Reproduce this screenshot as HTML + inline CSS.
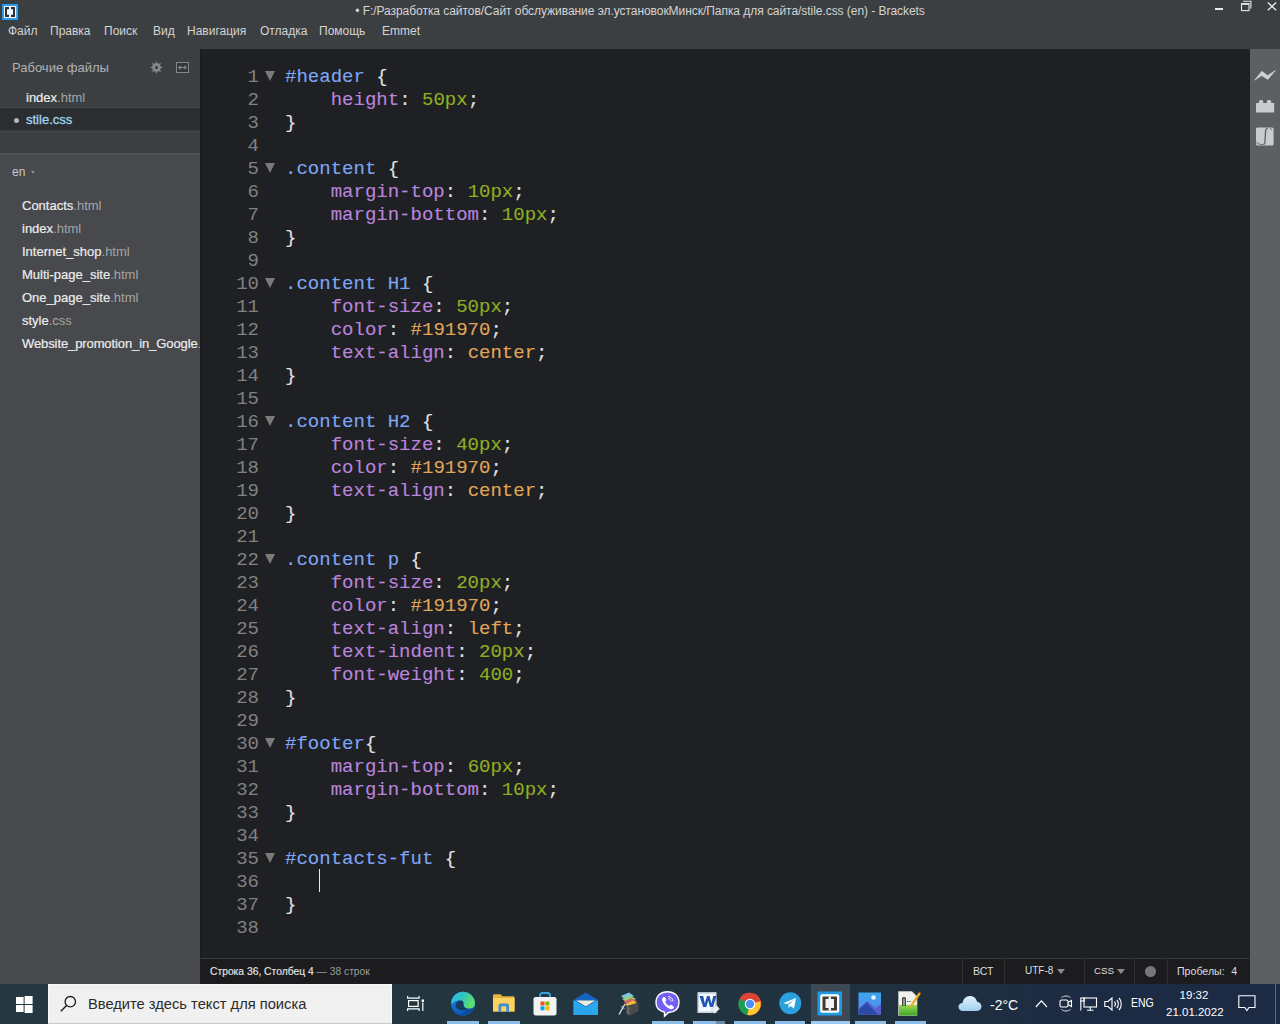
<!DOCTYPE html>
<html><head><meta charset="utf-8">
<style>
*{margin:0;padding:0;box-sizing:border-box}
html,body{width:1280px;height:1024px;overflow:hidden;background:#3c3f41;font-family:"Liberation Sans",sans-serif;position:relative}
.abs{position:absolute}
svg{position:absolute;overflow:visible}
#titlebar{left:0;top:0;width:1280px;height:49px;background:#3c3f41}
#title{left:0;top:4px;width:1280px;text-align:center;color:#d4d4d4;font-size:12px;white-space:nowrap;line-height:14px;letter-spacing:-0.05px;padding-left:0px}
.menu{top:24px;color:#d4d4d4;font-size:12px;white-space:nowrap;line-height:14px}
#sidebar{left:0;top:49px;width:200px;height:935px;background:#47494c}
#ws{left:0;top:49px;width:200px;height:106px;background:#3c3f42}
#editor{left:200px;top:49px;width:1050px;height:935px;background:#1e2023}
#toolbar{left:1250px;top:49px;width:30px;height:935px;background:#5d6062}
#status{left:200px;top:958px;width:1050px;height:26px;background:#1c1c1e;border-top:1px solid #35383b}
#taskbar{left:0;top:984px;width:1280px;height:40px;background:linear-gradient(90deg,#243842 0px,#23353f 600px,#1f2f3f 940px,#1c2b44 1100px,#1c2a44 1280px)}
.code{left:285.0px;font-family:"Liberation Mono",monospace;font-size:19.033px;white-space:pre;line-height:23px;-webkit-text-stroke:0.12px currentColor}
.code span{-webkit-text-stroke:0.12px currentColor}
.ln{left:200px;width:59px;text-align:right;color:#818181;font-family:"Liberation Mono",monospace;font-size:19.033px;line-height:23px}
.fold{left:265px;width:0;height:0;border-left:5.5px solid transparent;border-right:5.5px solid transparent;border-top:10px solid #7a7a7a}
.s{color:#7ea6f4}.p{color:#bb84dc}.n{color:#8fae22}.k{color:#e0a658}.b{color:#e2e2e2}
.fl{left:22px;font-size:13px;color:#ececec;white-space:nowrap;line-height:16px;-webkit-text-stroke:0.2px #ececec}
.fl i{font-style:normal;color:#a3a6a8;-webkit-text-stroke:0}
.st{font-size:11px;color:#dcdcdc;white-space:nowrap;line-height:14px}
.sep{top:959px;width:1px;height:25px;background:#2d2f31}
.ul{top:1021px;height:3px;background:#8cbde9}
</style></head><body>
<div id="titlebar" class="abs"></div>
<div id="title" class="abs">• F:/Разработка сайтов/Сайт обслуживание эл.установокМинск/Папка для сайта/stile.css (en) - Brackets</div>
<div class="abs menu" style="left:8px">Файл</div>
<div class="abs menu" style="left:50px">Правка</div>
<div class="abs menu" style="left:104px">Поиск</div>
<div class="abs menu" style="left:153px">Вид</div>
<div class="abs menu" style="left:187px">Навигация</div>
<div class="abs menu" style="left:260px">Отладка</div>
<div class="abs menu" style="left:319px">Помощь</div>
<div class="abs menu" style="left:382px">Emmet</div>
<svg style="left:0;top:0" width="20" height="22" viewBox="0 0 20 22"><rect x="1.5" y="3.5" width="17" height="17" fill="#17476a"/><rect x="2" y="4" width="16" height="16" fill="#2f9ae0"/><rect x="4" y="6" width="12.2" height="12" rx="0.8" fill="#f4fbff"/><rect x="5" y="7" width="10" height="10" fill="#2a2e35"/><rect x="7" y="9.2" width="6" height="5.5" fill="#f4f8fa"/><rect x="9" y="7" width="2" height="10" fill="#f4f8fa"/></svg>
<div class="abs" style="left:1215px;top:8px;width:8px;height:2px;background:#e8e8e8"></div>
<svg style="left:1240px;top:0px" width="12" height="12" viewBox="0 0 12 12"><path d="M3 1.2H10.9V8.6" fill="none" stroke="#e8e8e8" stroke-width="1.1"/><rect x="1.5" y="3.6" width="7.5" height="7" fill="none" stroke="#e8e8e8" stroke-width="1.1"/><rect x="1.5" y="3.2" width="7.5" height="1.6" fill="#e8e8e8"/></svg>
<svg style="left:1267px;top:2px" width="10" height="9" viewBox="0 0 10 9"><path d="M0.8 0.6L9.2 8.2M9.2 0.6L0.8 8.2" stroke="#f0f0f0" stroke-width="1.3"/></svg>


<div id="sidebar" class="abs"></div>
<div id="ws" class="abs"></div>
<div class="abs" style="left:12px;top:60px;font-size:13px;color:#b0b2b4;white-space:nowrap;line-height:16px">Рабочие файлы</div>
<svg style="left:149.7px;top:60.9px" width="13" height="13" viewBox="0 0 13 13"><polygon points="6.50,0.20 7.92,3.08 10.95,2.05 9.92,5.08 12.80,6.50 9.92,7.92 10.95,10.95 7.92,9.92 6.50,12.80 5.08,9.92 2.05,10.95 3.08,7.92 0.20,6.50 3.08,5.08 2.05,2.05 5.08,3.08" fill="#85888b"/><circle cx="6.5" cy="6.5" r="3.9" fill="#85888b"/><circle cx="6.5" cy="6.5" r="1.5" fill="#34373a"/></svg>
<svg style="left:176px;top:62px" width="13" height="11" viewBox="0 0 13 11"><rect x="0.5" y="0.5" width="12" height="10" fill="#34373a" stroke="#85888b" stroke-width="1"/><path d="M4 5.5h5" stroke="#85888b" stroke-width="1.2"/><path d="M2 5.5L4.5 3V8Z M11 5.5L8.5 3V8Z" fill="#85888b"/></svg>
<div class="abs fl" style="left:26px;top:90px">index<i>.html</i></div>
<div class="abs" style="left:0;top:107px;width:200px;height:1px;background:#45484a"></div>
<div class="abs" style="left:0;top:108px;width:200px;height:21px;background:#2b2d30"></div>
<div class="abs" style="left:0;top:129px;width:200px;height:2px;background:#333538"></div>
<div class="abs" style="left:0;top:131px;width:200px;height:1px;background:#46494b"></div>
<div class="abs" style="left:13.5px;top:117.5px;width:5.5px;height:5.5px;border-radius:50%;background:#b4b6b8"></div>
<div class="abs fl" style="left:26px;top:112px;color:#a0d6f2;-webkit-text-stroke:0.3px #a0d6f2">stile<i style="color:#a0d6f2;-webkit-text-stroke:0.3px #a0d6f2">.css</i></div>
<div class="abs" style="left:0;top:153px;width:200px;height:2px;background:#505356"></div>
<div class="abs" style="left:12px;top:165px;font-size:12px;color:#c8cacb;line-height:14px">en</div>
<div class="abs" style="left:31px;top:170.5px;width:0;height:0;border-left:2.7px solid transparent;border-right:2.7px solid transparent;border-top:3.8px solid #8a8d90"></div>
<div class="abs" style="left:0;top:0;width:200px;height:984px;overflow:hidden">
<div class="abs fl" style="top:198px">Contacts<i>.html</i></div>
<div class="abs fl" style="top:221px">index<i>.html</i></div>
<div class="abs fl" style="top:244px">Internet_shop<i>.html</i></div>
<div class="abs fl" style="top:267px">Multi-page_site<i>.html</i></div>
<div class="abs fl" style="top:290px">One_page_site<i>.html</i></div>
<div class="abs fl" style="top:313px">style<i>.css</i></div>
<div class="abs fl" style="top:336px;letter-spacing:-0.1px">Website_promotion_in_Google<i>.html</i></div>
</div>

<div id="editor" class="abs"></div>
<div class="abs" style="left:200px;top:49px;width:1px;height:909px;background:#191b1d"></div>
<div class="ln abs" style="top:65.5px">1</div>
<div class="fold abs" style="top:71px"></div>
<div class="code abs" style="top:65.5px"><span class="s">#header</span> <span class="b">{</span></div>
<div class="ln abs" style="top:88.5px">2</div>
<div class="code abs" style="top:88.5px">    <span class="p">height</span><span class="b">:</span> <span class="n">50px</span><span class="b">;</span></div>
<div class="ln abs" style="top:111.5px">3</div>
<div class="code abs" style="top:111.5px"><span class="b">}</span></div>
<div class="ln abs" style="top:134.5px">4</div>
<div class="code abs" style="top:134.5px"><span class="b"></span></div>
<div class="ln abs" style="top:157.5px">5</div>
<div class="fold abs" style="top:163px"></div>
<div class="code abs" style="top:157.5px"><span class="s">.content</span> <span class="b">{</span></div>
<div class="ln abs" style="top:180.5px">6</div>
<div class="code abs" style="top:180.5px">    <span class="p">margin-top</span><span class="b">:</span> <span class="n">10px</span><span class="b">;</span></div>
<div class="ln abs" style="top:203.5px">7</div>
<div class="code abs" style="top:203.5px">    <span class="p">margin-bottom</span><span class="b">:</span> <span class="n">10px</span><span class="b">;</span></div>
<div class="ln abs" style="top:226.5px">8</div>
<div class="code abs" style="top:226.5px"><span class="b">}</span></div>
<div class="ln abs" style="top:249.5px">9</div>
<div class="code abs" style="top:249.5px"><span class="b"></span></div>
<div class="ln abs" style="top:272.5px">10</div>
<div class="fold abs" style="top:278px"></div>
<div class="code abs" style="top:272.5px"><span class="s">.content H1</span> <span class="b">{</span></div>
<div class="ln abs" style="top:295.5px">11</div>
<div class="code abs" style="top:295.5px">    <span class="p">font-size</span><span class="b">:</span> <span class="n">50px</span><span class="b">;</span></div>
<div class="ln abs" style="top:318.5px">12</div>
<div class="code abs" style="top:318.5px">    <span class="p">color</span><span class="b">:</span> <span class="k">#191970</span><span class="b">;</span></div>
<div class="ln abs" style="top:341.5px">13</div>
<div class="code abs" style="top:341.5px">    <span class="p">text-align</span><span class="b">:</span> <span class="k">center</span><span class="b">;</span></div>
<div class="ln abs" style="top:364.5px">14</div>
<div class="code abs" style="top:364.5px"><span class="b">}</span></div>
<div class="ln abs" style="top:387.5px">15</div>
<div class="code abs" style="top:387.5px"><span class="b"></span></div>
<div class="ln abs" style="top:410.5px">16</div>
<div class="fold abs" style="top:416px"></div>
<div class="code abs" style="top:410.5px"><span class="s">.content H2</span> <span class="b">{</span></div>
<div class="ln abs" style="top:433.5px">17</div>
<div class="code abs" style="top:433.5px">    <span class="p">font-size</span><span class="b">:</span> <span class="n">40px</span><span class="b">;</span></div>
<div class="ln abs" style="top:456.5px">18</div>
<div class="code abs" style="top:456.5px">    <span class="p">color</span><span class="b">:</span> <span class="k">#191970</span><span class="b">;</span></div>
<div class="ln abs" style="top:479.5px">19</div>
<div class="code abs" style="top:479.5px">    <span class="p">text-align</span><span class="b">:</span> <span class="k">center</span><span class="b">;</span></div>
<div class="ln abs" style="top:502.5px">20</div>
<div class="code abs" style="top:502.5px"><span class="b">}</span></div>
<div class="ln abs" style="top:525.5px">21</div>
<div class="code abs" style="top:525.5px"><span class="b"></span></div>
<div class="ln abs" style="top:548.5px">22</div>
<div class="fold abs" style="top:554px"></div>
<div class="code abs" style="top:548.5px"><span class="s">.content p</span> <span class="b">{</span></div>
<div class="ln abs" style="top:571.5px">23</div>
<div class="code abs" style="top:571.5px">    <span class="p">font-size</span><span class="b">:</span> <span class="n">20px</span><span class="b">;</span></div>
<div class="ln abs" style="top:594.5px">24</div>
<div class="code abs" style="top:594.5px">    <span class="p">color</span><span class="b">:</span> <span class="k">#191970</span><span class="b">;</span></div>
<div class="ln abs" style="top:617.5px">25</div>
<div class="code abs" style="top:617.5px">    <span class="p">text-align</span><span class="b">:</span> <span class="k">left</span><span class="b">;</span></div>
<div class="ln abs" style="top:640.5px">26</div>
<div class="code abs" style="top:640.5px">    <span class="p">text-indent</span><span class="b">:</span> <span class="n">20px</span><span class="b">;</span></div>
<div class="ln abs" style="top:663.5px">27</div>
<div class="code abs" style="top:663.5px">    <span class="p">font-weight</span><span class="b">:</span> <span class="n">400</span><span class="b">;</span></div>
<div class="ln abs" style="top:686.5px">28</div>
<div class="code abs" style="top:686.5px"><span class="b">}</span></div>
<div class="ln abs" style="top:709.5px">29</div>
<div class="code abs" style="top:709.5px"><span class="b"></span></div>
<div class="ln abs" style="top:732.5px">30</div>
<div class="fold abs" style="top:738px"></div>
<div class="code abs" style="top:732.5px"><span class="s">#footer</span><span class="b">{</span></div>
<div class="ln abs" style="top:755.5px">31</div>
<div class="code abs" style="top:755.5px">    <span class="p">margin-top</span><span class="b">:</span> <span class="n">60px</span><span class="b">;</span></div>
<div class="ln abs" style="top:778.5px">32</div>
<div class="code abs" style="top:778.5px">    <span class="p">margin-bottom</span><span class="b">:</span> <span class="n">10px</span><span class="b">;</span></div>
<div class="ln abs" style="top:801.5px">33</div>
<div class="code abs" style="top:801.5px"><span class="b">}</span></div>
<div class="ln abs" style="top:824.5px">34</div>
<div class="code abs" style="top:824.5px"><span class="b"></span></div>
<div class="ln abs" style="top:847.5px">35</div>
<div class="fold abs" style="top:853px"></div>
<div class="code abs" style="top:847.5px"><span class="s">#contacts-fut</span> <span class="b">{</span></div>
<div class="ln abs" style="top:870.5px">36</div>
<div class="code abs" style="top:870.5px"><span class="b">    </span></div>
<div class="ln abs" style="top:893.5px">37</div>
<div class="code abs" style="top:893.5px"><span class="b">}</span></div>
<div class="ln abs" style="top:916.5px">38</div>
<div class="code abs" style="top:916.5px"><span class="b"></span></div>
<div class="abs" style="left:319px;top:869px;width:1.2px;height:23px;background:#e8e8e8"></div>
<div id="toolbar" class="abs"></div>
<svg style="left:1254px;top:69px" width="22" height="13" viewBox="0 0 22 13"><path d="M0.6 11.2L7.8 2.3L13.6 6.6L21.6 1.3L13.9 10.4L7.6 6.6Z" fill="#cfd1d2" stroke="#cfd1d2" stroke-width="0.6" stroke-linejoin="round"/></svg>
<svg style="left:1256px;top:99px" width="19" height="14" viewBox="0 0 19 14"><rect x="0" y="4" width="18.2" height="9.6" rx="0.6" fill="#c9cbcc"/><rect x="3" y="1" width="4.2" height="4" rx="1.5" fill="#c9cbcc"/><rect x="10.8" y="1" width="4.4" height="4" rx="1.5" fill="#c9cbcc"/></svg>
<svg style="left:1256px;top:127px" width="18" height="19" viewBox="0 0 18 19"><rect x="0" y="0.5" width="17.6" height="18" rx="1.5" fill="#c9cbcc"/><path d="M11.8 0.8C8.5 2 9.8 5.5 9.3 8.5C8.8 12 9.5 15 8.5 17.2" fill="none" stroke="#5d6062" stroke-width="1.3"/><path d="M0.3 15.3C2 17.3 5 17.8 8.5 17.2" fill="none" stroke="#5d6062" stroke-width="0.9"/><path d="M14.5 1L15.5 3" stroke="#5d6062" stroke-width="0.8"/></svg>

<div id="status" class="abs"></div>
<div class="abs st" style="left:210px;top:965px;font-size:10.3px"><span style="color:#e4e4e4;-webkit-text-stroke:0.15px #e4e4e4">Строка 36, Столбец 4</span> <span style="color:#9a9c9e">— 38 строк</span></div>
<div class="abs sep" style="left:962px"></div>
<div class="abs sep" style="left:1004px"></div>
<div class="abs sep" style="left:1084px"></div>
<div class="abs sep" style="left:1134px"></div>
<div class="abs sep" style="left:1167px"></div>
<div class="abs st" style="left:973px;top:964px;font-size:10.6px">ВСТ</div>
<div class="abs st" style="left:1025px;top:964px;font-size:10px">UTF-8</div>
<div class="abs" style="left:1057px;top:969px;width:0;height:0;border-left:4px solid transparent;border-right:4px solid transparent;border-top:5px solid #8a8c8e"></div>
<div class="abs st" style="left:1094px;top:964px;font-size:9.8px">CSS</div>
<div class="abs" style="left:1117px;top:969px;width:0;height:0;border-left:4px solid transparent;border-right:4px solid transparent;border-top:5px solid #8a8c8e"></div>
<div class="abs" style="left:1145px;top:966px;width:11px;height:11px;border-radius:50%;background:#757779"></div>
<div class="abs st" style="left:1177px;top:964px;font-size:10.6px">Пробелы:<span style="margin-left:6.5px">4</span></div>

<div id="taskbar" class="abs"></div>
<svg style="left:16px;top:996px" width="17" height="17" viewBox="0 0 17 17"><g fill="#ffffff"><rect x="0" y="1" width="7.6" height="7" /><rect x="8.6" y="0" width="8" height="8"/><rect x="0" y="9" width="7.6" height="7"/><rect x="8.6" y="9" width="8" height="8"/></g></svg>
<div class="abs" style="left:48px;top:984px;width:344px;height:40px;background:#f0f0f0;border:1px solid #f7f7f7;border-bottom-color:#c8c8c8"></div>
<svg style="left:60px;top:995px" width="17" height="17" viewBox="0 0 17 17"><circle cx="10.3" cy="6.7" r="5.2" fill="none" stroke="#1a1a1a" stroke-width="1.3"/><path d="M6.6 10.4L0.8 16.2" stroke="#1a1a1a" stroke-width="1.4"/></svg>
<div class="abs" style="left:88px;top:995px;font-size:14.7px;color:#2b2b2b;white-space:nowrap;line-height:18px">Введите здесь текст для поиска</div>
<svg style="left:407px;top:996px" width="17" height="15" viewBox="0 0 17 15"><g fill="none" stroke="#ffffff" stroke-width="1.2"><path d="M0.6 0v2.2h11.5V0M0.6 15v-2.2h11.5V15"/><rect x="1.6" y="4.6" width="9.5" height="5.8"/><path d="M15.8 6.5v8.5"/></g><rect x="14.6" y="3.5" width="2.4" height="2.4" fill="#fff"/></svg>

<svg style="left:450px;top:991px" width="26" height="26" viewBox="0 0 26 26"><defs><linearGradient id="eg1" x1="0" y1="0" x2="1" y2="0.4"><stop offset="0" stop-color="#33b5f0"/><stop offset="0.5" stop-color="#2fc4c0"/><stop offset="1" stop-color="#5fe06a"/></linearGradient><linearGradient id="eg2" x1="0" y1="0" x2="0.3" y2="1"><stop offset="0" stop-color="#1e8ef0"/><stop offset="1" stop-color="#0c56b5"/></linearGradient></defs><circle cx="13" cy="12.8" r="12" fill="url(#eg2)"/><path d="M1.2 11.5C2 5 7 0.8 13 0.8C19.6 0.8 25 6 25 12.5C25 15.5 23 17.5 19.5 17.5C16 17.5 13.5 16 13.5 13.5C13.5 11 12 9.5 9.5 9.5C6 9.5 3 11 1.2 13.5Z" fill="url(#eg1)"/><path d="M5.5 15C5.5 11.5 8 9.5 10.5 9.5C13 9.5 14 11.5 13.5 13.5C13 15 14.5 17 17 17.5C14.5 19.5 11.5 19.5 9 18.5C7 17.8 5.5 16.5 5.5 15Z" fill="#173a5e"/><path d="M14 24.6C19 24 23 20.5 24.5 16C22.5 18 19 18.5 16.5 17.8C15 19.5 13.5 21 12 24.7Z" fill="#0d4a98" opacity="0.8"/></svg>

<svg style="left:493px;top:994px" width="22" height="19" viewBox="0 0 22 19"><path d="M0 1.5C0 0.8 0.5 0.3 1.2 0.3H7.5L9.5 2.2H20.3C21 2.2 21.5 2.7 21.5 3.4V17.5H0Z" fill="#e8b33a"/><rect x="0" y="4" width="21.5" height="13.5" fill="#ffd25e"/><path d="M5.5 18V11.5C5.5 10.3 6.3 9.5 7.5 9.5H14C15.2 9.5 16 10.3 16 11.5V18H13.2V13.2C13.2 12.6 12.8 12.2 12.2 12.2H9.3C8.7 12.2 8.3 12.6 8.3 13.2V18Z" fill="#3f8fd8"/></svg>

<svg style="left:533px;top:992px" width="24" height="24" viewBox="0 0 24 24"><path d="M7 6V3.5C7 2 8 1 9.5 1H14.5C16 1 17 2 17 3.5V6" fill="none" stroke="#36a3d9" stroke-width="1.8"/><rect x="0.5" y="5" width="23" height="18.5" rx="2.2" fill="#f3f3f3"/><rect x="7.5" y="9.5" width="4" height="4" fill="#f25022"/><rect x="12.3" y="9.5" width="4" height="4" fill="#7fba00"/><rect x="7.5" y="14.3" width="4" height="4" fill="#00a4ef"/><rect x="12.3" y="14.3" width="4" height="4" fill="#ffb900"/></svg>

<svg style="left:573px;top:992px" width="26" height="24" viewBox="0 0 26 24"><path d="M0.5 8L12.8 0.5L25 8V23H0.5Z" fill="#1565c0"/><path d="M0.5 8L12.8 15L25 8V23H0.5Z" fill="#2aa8ef"/><path d="M3 8.5H22.5L12.8 14.2Z" fill="#f3ead8"/><path d="M0.5 23L12 14.5L25 23Z" fill="#29a4ea"/></svg>

<svg style="left:617px;top:992px" width="23" height="24" viewBox="0 0 23 24"><path d="M4 4L12 0.5L17 4L9 8Z" fill="#7fc6e8"/><path d="M5 7L13 3.5L19 7L11 11Z" fill="#8ed57a"/><path d="M6.5 10L14.5 6L20 9.5L12 13.5Z" fill="#e06060"/><path d="M8 12.5L16 8.5L21.5 12L13.5 16Z" fill="#e8c040"/><path d="M9.5 14L21.5 10.5V19.5L12.5 23.5L9.5 21Z" fill="#4a4a4a"/><path d="M12.5 15.5V23.5L9.5 21V14Z" fill="#666"/><path d="M8 12L2 22.5" stroke="#e0e0e0" stroke-width="1.4"/><path d="M4 14.5L7.5 16.5" stroke="#d0d0d0" stroke-width="1"/></svg>

<svg style="left:655px;top:991px" width="25" height="26" viewBox="0 0 25 26"><path d="M12.5 0.8C19 0.8 24 4.5 24 11.5C24 18 19.5 21 13.5 21.5L9.5 25.2V21.2C4 20 1 17 1 11.5C1 4.5 6 0.8 12.5 0.8Z" fill="#7360f2" stroke="#ffffff" stroke-width="1.4"/><path d="M8 6.5C8.8 5.8 9.8 6 10.3 6.8L11.2 8.5C11.5 9.2 11.3 9.8 10.8 10.2L10.2 10.7C10.8 12.5 12.3 14.2 14.3 15L14.8 14.4C15.3 13.8 16 13.7 16.6 14.1L18.2 15.2C18.9 15.7 19 16.6 18.4 17.3C17.5 18.3 16.4 18.6 15.2 18.1C11.5 16.6 8.6 13.6 7.3 9.8C6.9 8.5 7.2 7.3 8 6.5Z" fill="#ffffff"/><path d="M13.5 5.5C16 5.8 17.8 7.6 18 10M13.5 7.6C15 7.8 15.8 8.6 16 10" fill="none" stroke="#fff" stroke-width="0.9" stroke-linecap="round"/></svg>

<svg style="left:697px;top:992px" width="23" height="22" viewBox="0 0 23 22"><rect x="0.5" y="0.3" width="19" height="20.5" fill="#f7f9fc"/><rect x="1.5" y="1.3" width="17" height="18.5" fill="none" stroke="#c7d5ea" stroke-width="1"/><path d="M2.5 4H6.2L7.8 11.5L10 4H12.5L14.5 11.5L16.2 4H19.5L16 15H13L11.2 8.5L9.3 15H6.2Z" fill="#1f55b3"/><path d="M14 17.5L19.5 13L22.5 17L17.5 21.5Z" fill="#e8eef5" stroke="#aab" stroke-width="0.5"/></svg>

<svg style="left:738px;top:992px" width="24" height="24" viewBox="0 0 24 24"><circle cx="12" cy="12" r="11.3" fill="#db4437"/><path d="M12 12L22.3 9A11.3 11.3 0 0 1 9 22.9Z" fill="#fcc934"/><path d="M12 12L9 22.9A11.3 11.3 0 0 1 1.7 6.5Z" fill="#1e9e54"/><path d="M12 12L1.7 6.5A11.3 11.3 0 0 1 12 0.7L22.3 9Z" fill="#db4437"/><circle cx="12" cy="12" r="5.3" fill="#ffffff"/><circle cx="12" cy="12" r="4.2" fill="#4d8ef6"/></svg>

<svg style="left:779px;top:992px" width="23" height="23" viewBox="0 0 23 23"><circle cx="11.3" cy="11.3" r="11" fill="#2aa1dd"/><path d="M4.5 11L17 6L15 16.5L11.5 14L9.5 16V12.8L15.3 7.8L8.2 12.2Z" fill="#ffffff"/></svg>

<div class="abs" style="left:811px;top:984px;width:39px;height:40px;background:#3d4a56"></div>
<svg style="left:817px;top:991px" width="26" height="25" viewBox="0 0 26 25"><rect x="0.5" y="0.5" width="24.5" height="24" fill="#1e9ae0"/><rect x="3.2" y="3.2" width="19" height="18.5" rx="2" fill="#ffffff"/><rect x="5.5" y="5.5" width="14.5" height="14" fill="#3e3a36"/><rect x="8.5" y="8" width="8.5" height="9" fill="#f4f4f4"/><rect x="11.5" y="5.5" width="2.5" height="14" fill="#f4f4f4"/></svg>

<svg style="left:858px;top:992px" width="24" height="23" viewBox="0 0 24 23"><defs><linearGradient id="ph" x1="0" y1="0" x2="0" y2="1"><stop offset="0" stop-color="#3aa6f0"/><stop offset="1" stop-color="#5a86e8"/></linearGradient></defs><rect x="0.5" y="0.5" width="22.5" height="22" fill="url(#ph)"/><path d="M0.5 17L9 9L17 16L23 12V22.5H0.5Z" fill="#5a5fd0"/><path d="M0.5 18L8.5 10.5L20 22.5H0.5Z" fill="#2b4aa8"/><circle cx="15.5" cy="5.5" r="2.3" fill="#e8f2ff"/></svg>

<svg style="left:898px;top:991px" width="23" height="26" viewBox="0 0 23 26"><defs><linearGradient id="npg" x1="0" y1="0" x2="0" y2="1"><stop offset="0" stop-color="#9ad850"/><stop offset="1" stop-color="#3fa82a"/></linearGradient></defs><path d="M0.5 0.5H14L19 5.5V24.5H0.5Z" fill="#f2f2ec" stroke="#cfcfc6" stroke-width="0.6"/><rect x="1" y="14" width="18" height="10.5" fill="url(#npg)"/><path d="M4.8 6.5V15M7.2 6.5V15M4.8 6.8H7.2" stroke="#2a2a2a" stroke-width="1.3" fill="none"/><path d="M9 10.5H12.5" stroke="#444" stroke-width="1.1" stroke-dasharray="1.4 0.9"/><path d="M21 1L12.5 14L11.8 17.2L14.4 15L23 2.5Z" fill="#e8b020"/><path d="M21 1L23 2.5" stroke="#c04020" stroke-width="1"/></svg>

<div class="abs ul" style="left:447px;width:32px"></div>
<div class="abs ul" style="left:488px;width:32px"></div>
<div class="abs ul" style="left:652px;width:32px"></div>
<div class="abs ul" style="left:693px;width:23px"></div>
<div class="abs ul" style="left:716px;width:9px;background:#6a8aa6"></div>
<div class="abs ul" style="left:734px;width:32px"></div>
<div class="abs ul" style="left:775px;width:30px"></div>
<div class="abs ul" style="left:811px;width:39px;background:#9ccaf0"></div>
<div class="abs ul" style="left:855px;width:31px"></div>
<div class="abs ul" style="left:895px;width:31px"></div>

<svg style="left:958px;top:995px" width="24" height="17" viewBox="0 0 24 17"><defs><linearGradient id="cl" x1="0" y1="0" x2="0" y2="1"><stop offset="0" stop-color="#dff2fb"/><stop offset="1" stop-color="#9fd0ec"/></linearGradient></defs><path d="M5 16C2.2 16 0.5 14.2 0.5 12C0.5 9.6 2.4 8 4.6 8C5 4 8 1 12 1C15.6 1 18.4 3.4 19 6.8C21.5 7 23.5 9 23.5 11.6C23.5 14.2 21.5 16 19 16Z" fill="url(#cl)"/></svg>
<div class="abs" style="left:990px;top:997px;font-size:14px;color:#ffffff;white-space:nowrap;line-height:17px">-2°C</div>
<svg style="left:1035px;top:999px" width="13" height="9" viewBox="0 0 13 9"><path d="M0.8 8L6.4 1.8L12 8" fill="none" stroke="#fff" stroke-width="1.2"/></svg>
<svg style="left:1059px;top:995px" width="14" height="17" viewBox="0 0 14 17"><rect x="1" y="5" width="8" height="7" rx="1.5" fill="none" stroke="#fff" stroke-width="1.1"/><path d="M9 7.5L12.5 5.5V11.5L9 9.5" fill="none" stroke="#fff" stroke-width="1.1"/><path d="M2.5 2.5C5 0.5 9 0.5 11.5 2.5M2.5 14.5C5 16.5 9 16.5 11.5 14.5" fill="none" stroke="#ddd" stroke-width="1"/></svg>
<svg style="left:1080px;top:997px" width="17" height="14" viewBox="0 0 17 14"><g fill="none" stroke="#fff" stroke-width="1.1"><rect x="4" y="1" width="12.5" height="9"/><path d="M10.2 10V13M7 13.2H13.5"/><path d="M0.8 3.5V13.5"/><rect x="0.8" y="1" width="3.5" height="3"/></g></svg>
<svg style="left:1104px;top:997px" width="18" height="14" viewBox="0 0 18 14"><g fill="none" stroke="#fff" stroke-width="1.1"><path d="M0.8 4.5H4L8 1V13L4 9.5H0.8Z"/><path d="M10.5 4.5C11.5 5.8 11.5 8.2 10.5 9.5M12.8 2.8C14.8 5 14.8 9 12.8 11.2M15 1C18 4.2 18 9.8 15 13"/></g></svg>
<div class="abs" style="left:1131px;top:996px;font-size:12.5px;color:#ffffff;white-space:nowrap;line-height:14px;transform:scaleX(0.84);transform-origin:0 0">ENG</div>
<div class="abs" style="left:1166px;top:988px;width:56px;text-align:center;font-size:11.5px;color:#ffffff;white-space:nowrap;line-height:14px">19:32</div>
<div class="abs" style="left:1166px;top:1005px;width:56px;text-align:center;font-size:11.5px;color:#ffffff;white-space:nowrap;line-height:14px">21.01.2022</div>
<svg style="left:1238px;top:995px" width="18" height="17" viewBox="0 0 18 17"><path d="M0.8 0.8H17V12.5H11L8.9 15.5L6.8 12.5H0.8Z" fill="none" stroke="#fff" stroke-width="1.1"/></svg>
<div class="abs" style="left:1275px;top:984px;width:1px;height:40px;background:#5c6b78"></div>

</body></html>
